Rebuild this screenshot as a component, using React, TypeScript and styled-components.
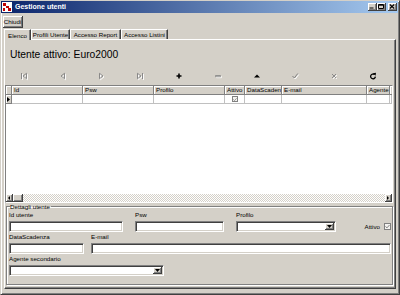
import React from "react";
import styled, { createGlobalStyle } from "styled-components";

const face = "#d4d0c8";
const shadow = "#808080";
const dark = "#404040";

const GlobalStyle = createGlobalStyle`
  html, body {
    margin: 0;
    padding: 0;
    background: ${face};
  }
  body {
    font-family: "Liberation Sans", Arial, sans-serif;
  }
`;

const Window = styled.div`
  width: 400px;
  height: 295px;
  box-sizing: border-box;
  background: ${face};
  border: 1px solid;
  border-color: ${face} ${dark} ${dark} ${face};
  box-shadow: inset 1px 1px #fff, inset -1px -1px ${shadow};
  padding: 0 1px 5px 0;
  display: flex;
  flex-direction: column;
  font-family: "Liberation Sans", Arial, sans-serif;
  font-size: 6.2px;
  color: #000;
  overflow: hidden;
`;

const TitleBar = styled.div`
  height: 12px;
  flex: none;
  display: flex;
  align-items: center;
  padding: 0 1px 0 1px;
  background: linear-gradient(to right, #0a246a, #a6caf0);
`;

const TitleText = styled.span`
  margin-left: 3px;
  color: #fff;
  font-weight: bold;
  font-size: 7px;
  line-height: 12px;
`;

const TitleButtons = styled.div`
  margin-left: auto;
  display: flex;
  align-items: center;
`;

const CaptionButton = styled.div<{ $gap?: number }>`
  width: 9px;
  height: 8px;
  box-sizing: border-box;
  margin-left: ${(p) => p.$gap ?? 0}px;
  background: ${face};
  border-right: 1px solid ${dark};
  border-bottom: 1px solid ${dark};
  box-shadow: inset 1px 1px #fff, inset -1px -1px ${shadow};
  display: flex;
  align-items: center;
  justify-content: center;
`;

const ButtonBar = styled.div`
  flex: none;
  display: flex;
  margin: 3px 0 0 2px;
`;

const PushButton = styled.div`
  width: 20px;
  height: 12px;
  box-sizing: border-box;
  background: ${face};
  border-right: 1px solid ${dark};
  border-bottom: 1px solid ${dark};
  box-shadow: inset 1px 1px #fff, inset -1px -1px ${shadow};
  display: flex;
  align-items: center;
  justify-content: center;
  line-height: 11px;
`;

const TabRow = styled.div`
  flex: none;
  height: 11px;
  display: flex;
  align-items: flex-end;
  margin-left: 3px;
`;

const Tab = styled.div<{ $w: number; $active?: boolean }>`
  width: ${(p) => p.$w}px;
  height: ${(p) => (p.$active ? 11 : 10)}px;
  box-sizing: border-box;
  background: ${face};
  border-top: 1px solid #fff;
  border-left: 1px solid #fff;
  border-right: 1px solid ${dark};
  box-shadow: inset -1px 0 ${shadow};
  display: flex;
  align-items: center;
  justify-content: center;
  line-height: 9px;
  position: relative;
  z-index: ${(p) => (p.$active ? 1 : 0)};
  margin-bottom: ${(p) => (p.$active ? -1 : 0)}px;
`;

const TabPanel = styled.div`
  flex: 1;
  min-height: 0;
  margin: 0 2px 0 3px;
  box-sizing: border-box;
  border: 1px solid;
  border-color: #fff ${dark} ${dark} #fff;
  box-shadow: inset -1px -1px ${shadow};
  padding: 0 2px 2px 0;
  display: flex;
  flex-direction: column;
`;

const HeaderPanel = styled.div`
  height: 28px;
  flex: none;
  box-sizing: border-box;
  display: flex;
  align-items: center;
  padding: 1px 0 1px 5px;
  font-size: 10.3px;
`;

const Navigator = styled.div`
  height: 16px;
  flex: none;
  display: flex;
`;

const NavButton = styled.div`
  flex: 1;
  display: flex;
  align-items: center;
  justify-content: center;
`;

const Grid = styled.div`
  height: 118px;
  flex: none;
  margin-top: 1px;
  box-sizing: border-box;
  border: 1px solid;
  border-color: ${shadow} #fff #fff ${shadow};
  background: #fff;
  display: flex;
  flex-direction: column;
  overflow: hidden;
`;

const GridRow = styled.div`
  display: flex;
  height: 9px;
  flex: none;
`;

const HeadCell = styled.div<{ $w: number }>`
  ${(p) => (p.$w ? `width: ${p.$w}px; flex: none;` : "flex: 1; min-width: 0;")}
  box-sizing: border-box;
  background: ${face};
  border-right: 1px solid ${shadow};
  border-bottom: 1px solid ${shadow};
  box-shadow: inset 1px 1px #fff;
  padding-left: 2px;
  line-height: 8px;
  white-space: nowrap;
  overflow: hidden;
`;

const DataCell = styled.div<{ $w: number }>`
  ${(p) => (p.$w ? `width: ${p.$w}px; flex: none;` : "flex: 1; min-width: 0;")}
  box-sizing: border-box;
  border-right: 1px solid #c0c0c0;
  border-bottom: 1px solid #c0c0c0;
  display: flex;
  align-items: center;
  justify-content: center;
`;

const IndicatorCell = styled.div`
  width: 6px;
  flex: none;
  box-sizing: border-box;
  background: ${face};
  border-right: 1px solid ${shadow};
  border-bottom: 1px solid ${shadow};
  box-shadow: inset 1px 1px #fff;
  display: flex;
  align-items: center;
  justify-content: center;
`;

const GridBody = styled.div`
  flex: 1;
`;

const HScroll = styled.div`
  height: 8px;
  flex: none;
  display: flex;
  background: repeating-conic-gradient(#fff 0 25%, ${face} 0 50%) 0 0 / 2px 2px;
`;

const ScrollPart = styled.div<{ $w: number; $push?: boolean }>`
  width: ${(p) => p.$w}px;
  height: 8px;
  box-sizing: border-box;
  margin-left: ${(p) => (p.$push ? "auto" : "0")};
  background: ${face};
  border-right: 1px solid ${dark};
  border-bottom: 1px solid ${dark};
  box-shadow: inset 1px 1px #fff, inset -1px -1px ${shadow};
  display: flex;
  align-items: center;
  justify-content: center;
`;

const GroupBox = styled.fieldset`
  flex: 1;
  min-width: 0;
  margin: 0 0 1px 1px;
  padding: 0 1px 0 2px;
  border: 1px solid ${shadow};
  box-shadow: inset 1px 1px #fff, 1px 1px #fff;
  display: flex;
  flex-direction: column;
`;

const Legend = styled.legend`
  padding: 0 1px 0 0;
  margin-left: 1px;
  line-height: 7px;
  font-size: 6.2px;
`;

const FieldRow = styled.div<{ $gap: number }>`
  display: flex;
  align-items: flex-end;
  gap: ${(p) => p.$gap}px;
`;

const Field = styled.div<{ $w?: number }>`
  display: flex;
  flex-direction: column;
  ${(p) => (p.$w ? `width: ${p.$w}px; flex: none;` : "flex: 1; min-width: 0;")}
`;

const Label = styled.label`
  height: 11px;
  line-height: 10px;
  white-space: nowrap;
`;

const Input = styled.div`
  height: 11px;
  box-sizing: border-box;
  background: #fff;
  border: 1px solid;
  border-color: ${shadow} #fff #fff ${shadow};
  box-shadow: inset 1px 1px ${dark}, inset -1px -1px ${face};
  display: flex;
  justify-content: flex-end;
  padding: 1px;
`;

const DropButton = styled.div`
  width: 9px;
  height: 7px;
  box-sizing: border-box;
  background: ${face};
  border-right: 1px solid ${dark};
  border-bottom: 1px solid ${dark};
  box-shadow: inset 1px 1px #fff, inset -1px -1px ${shadow};
  display: flex;
  align-items: center;
  justify-content: center;
`;

const CheckField = styled.div`
  margin-left: auto;
  margin-right: 0;
  height: 11px;
  display: flex;
  align-items: center;
  gap: 4px;
`;

const CheckBox = styled.div<{ $size: number }>`
  width: ${(p) => p.$size}px;
  height: ${(p) => p.$size}px;
  box-sizing: border-box;
  border: 1px solid ${shadow};
  background: #f4f3f0;
  display: flex;
  align-items: center;
  justify-content: center;
`;

const AppIcon = () => (
  <svg width="10" height="10" viewBox="0 0 10 10">
    <rect x="0" y="0" width="10" height="10" fill="#fff" />
    <rect x="1" y="1" width="3" height="3" fill="#c00000" />
    <rect x="4" y="4" width="3" height="2" fill="#c00000" />
    <rect x="6" y="6" width="3" height="3" fill="#c00000" />
    <rect x="1" y="6" width="2" height="3" fill="#c00000" />
  </svg>
);

const Glyph = ({ kind }: { kind: "min" | "max" | "close" }) => (
  <svg width="6" height="5" viewBox="0 0 6 5">
    {kind === "min" && <rect x="0.5" y="3.5" width="4" height="1" fill="#000" />}
    {kind === "max" && (
      <path d="M0.5 0.5h5v4h-5z M0.5 1.2h5" stroke="#000" strokeWidth="1" fill="none" />
    )}
    {kind === "close" && (
      <path d="M0.8 0.5l4.4 4 M5.2 0.5l-4.4 4" stroke="#000" strokeWidth="1.1" />
    )}
  </svg>
);

type NavKind = "first" | "prior" | "next" | "last" | "insert" | "delete" | "edit" | "post" | "cancel" | "refresh";

const navShape = (kind: NavKind, color: string) => {
  switch (kind) {
    case "first":
      return (
        <g fill="none" stroke={color} strokeWidth="0.9">
          <path d="M1.5 1v6" />
          <path d="M6.5 1.3v5.4L3 4z" />
        </g>
      );
    case "prior":
      return <path d="M5.5 1.3v5.4L2 4z" fill="none" stroke={color} strokeWidth="0.9" />;
    case "next":
      return <path d="M2.5 1.3v5.4L6 4z" fill="none" stroke={color} strokeWidth="0.9" />;
    case "last":
      return (
        <g fill="none" stroke={color} strokeWidth="0.9">
          <path d="M1.5 1.3v5.4L5 4z" />
          <path d="M6.5 1v6" />
        </g>
      );
    case "insert":
      return <path d="M1.5 3.2h5v1.6h-5z M3.2 1.5h1.6v5h-1.6z" fill={color} />;
    case "delete":
      return <path d="M1.5 3.5h5v1.2h-5z" fill="none" stroke={color} strokeWidth="0.8" />;
    case "edit":
      return <path d="M1 5.5h6L4 2.5z" fill={color} />;
    case "post":
      return <path d="M1.5 4l1.8 2L6.8 1.5" fill="none" stroke={color} strokeWidth="1" />;
    case "cancel":
      return <path d="M2 2l4 4 M6 2l-4 4" fill="none" stroke={color} strokeWidth="0.9" />;
    case "refresh":
      return (
        <g>
          <path d="M5.6 2.6A2.4 2.4 0 1 0 6.4 4.6" fill="none" stroke={color} strokeWidth="1.3" />
          <path d="M4 1.2L7 0.8L6.6 3.8z" fill={color} />
        </g>
      );
  }
};

const NavIcon = ({ kind, enabled }: { kind: NavKind; enabled: boolean }) => (
  <svg width="9" height="9" viewBox="0 0 9 9">
    {!enabled && <g transform="translate(1 1)">{navShape(kind, "#fff")}</g>}
    {navShape(kind, enabled ? "#000" : shadow)}
  </svg>
);

const Triangle = ({ dir, w = 3, h = 5 }: { dir: "left" | "right" | "down"; w?: number; h?: number }) => (
  <svg width={w} height={h} viewBox={`0 0 ${w} ${h}`}>
    {dir === "right" && <path d={`M0 0L${w} ${h / 2}L0 ${h}z`} fill="#000" />}
    {dir === "left" && <path d={`M${w} 0L0 ${h / 2}L${w} ${h}z`} fill="#000" />}
    {dir === "down" && <path d={`M0 0H${w}L${w / 2} ${h}z`} fill="#000" />}
  </svg>
);

const Check = ({ color }: { color: string }) => (
  <svg width="5" height="5" viewBox="0 0 5 5">
    <path d="M0.5 2.3l1.4 1.6L4.5 1" fill="none" stroke={color} strokeWidth="1" />
  </svg>
);

// the last column only peeks in at the right edge of the grid
const columns = [
  { key: "id", title: "Id", w: 71 },
  { key: "psw", title: "Psw", w: 71 },
  { key: "profilo", title: "Profilo", w: 71 },
  { key: "attivo", title: "Attivo", w: 20 },
  { key: "scadenza", title: "DataScaden", w: 37 },
  { key: "email", title: "E-mail", w: 85 },
  { key: "agente", title: "Agente", w: 23 },
  { key: "agente2", title: "A", w: 0 },
];

const navButtons: { kind: NavKind; enabled: boolean }[] = [
  { kind: "first", enabled: false },
  { kind: "prior", enabled: false },
  { kind: "next", enabled: false },
  { kind: "last", enabled: false },
  { kind: "insert", enabled: true },
  { kind: "delete", enabled: false },
  { kind: "edit", enabled: true },
  { kind: "post", enabled: false },
  { kind: "cancel", enabled: false },
  { kind: "refresh", enabled: true },
];

const tabs = [
  { label: "Elenco", w: 27, active: true },
  { label: "Profili Utente", w: 39 },
  { label: "Accesso Report", w: 51 },
  { label: "Accesso Listini", w: 47 },
];

const Select = () => (
  <Input>
    <DropButton>
      <Triangle dir="down" w={5} h={3} />
    </DropButton>
  </Input>
);

export default function App() {
  return (
    <>
      <GlobalStyle />
      <Window>
        <TitleBar>
          <AppIcon />
          <TitleText>Gestione utenti</TitleText>
          <TitleButtons>
            <CaptionButton>
              <Glyph kind="min" />
            </CaptionButton>
            <CaptionButton $gap={0}>
              <Glyph kind="max" />
            </CaptionButton>
            <CaptionButton $gap={2}>
              <Glyph kind="close" />
            </CaptionButton>
          </TitleButtons>
        </TitleBar>

        <ButtonBar>
          <PushButton>Chiudi</PushButton>
        </ButtonBar>

        <TabRow>
          {tabs.map((t) => (
            <Tab key={t.label} $w={t.w} $active={t.active}>
              {t.label}
            </Tab>
          ))}
        </TabRow>

        <TabPanel>
          <HeaderPanel>Utente attivo: Euro2000</HeaderPanel>

          <Navigator>
            {navButtons.map((b) => (
              <NavButton key={b.kind}>
                <NavIcon kind={b.kind} enabled={b.enabled} />
              </NavButton>
            ))}
          </Navigator>

          <Grid>
            <GridRow>
              <IndicatorCell />
              {columns.map((c) => (
                <HeadCell key={c.key} $w={c.w}>
                  {c.title}
                </HeadCell>
              ))}
            </GridRow>
            <GridRow>
              <IndicatorCell>
                <Triangle dir="right" w={3} h={5} />
              </IndicatorCell>
              {columns.map((c) => (
                <DataCell key={c.key} $w={c.w}>
                  {c.key === "attivo" && (
                    <CheckBox $size={6}>
                      <Check color={shadow} />
                    </CheckBox>
                  )}
                </DataCell>
              ))}
            </GridRow>
            <GridBody />
            <HScroll>
              <ScrollPart $w={7}>
                <Triangle dir="left" w={2} h={4} />
              </ScrollPart>
              <ScrollPart $w={10} />
              <ScrollPart $w={7} $push>
                <Triangle dir="right" w={2} h={4} />
              </ScrollPart>
            </HScroll>
          </Grid>

          <GroupBox>
            <Legend>Dettagli utente</Legend>
            <FieldRow $gap={12}>
              <Field $w={114}>
                <Label>Id utente</Label>
                <Input />
              </Field>
              <Field $w={89}>
                <Label>Psw</Label>
                <Input />
              </Field>
              <Field $w={100}>
                <Label>Profilo</Label>
                <Select />
              </Field>
              <CheckField>
                <span>Attivo</span>
                <CheckBox $size={7}>
                  <Check color={shadow} />
                </CheckBox>
              </CheckField>
            </FieldRow>
            <FieldRow $gap={7}>
              <Field $w={75}>
                <Label>DataScadenza</Label>
                <Input />
              </Field>
              <Field>
                <Label>E-mail</Label>
                <Input />
              </Field>
            </FieldRow>
            <FieldRow $gap={0}>
              <Field $w={155}>
                <Label>Agente secondario</Label>
                <Select />
              </Field>
            </FieldRow>
          </GroupBox>
        </TabPanel>
      </Window>
    </>
  );
}
